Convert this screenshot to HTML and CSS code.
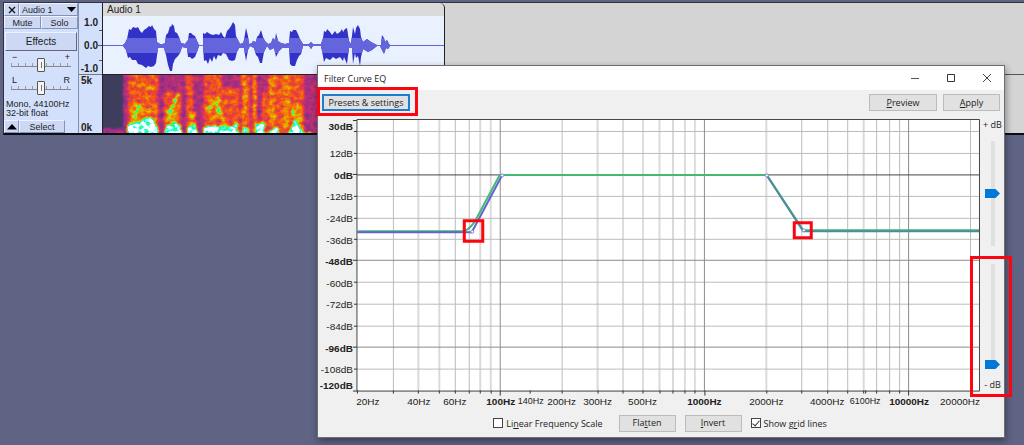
FILE: index.html
```html
<!DOCTYPE html>
<html lang="en">
<head>
<meta charset="utf-8">
<title>Filter Curve EQ</title>
<link rel="stylesheet" href="styles.css">
</head>
<body>
<main class="desktop">
  <section class="track">
    <div class="panel">
      <div class="panel-row head">
        <button class="cell close" aria-label="Close track"><svg width="8" height="8" viewBox="0 0 8 8"><path d="M1 1l6 6M7 1L1 7" stroke="#111" stroke-width="1.3"/></svg></button>
        <button class="cell name"><span>Audio 1</span><svg width="9" height="6" viewBox="0 0 9 6"><path d="M0 0h9L4.500 5z" fill="#000"/></svg></button>
      </div>
      <div class="panel-row"><button class="cell half">Mute</button><button class="cell half">Solo</button></div>
      <button class="cell effects">Effects</button>
      <div class="knob">
        <div class="ends"><span>−</span><span>+</span></div>
        <input class="hslider" type="range" aria-label="Gain" value="50">
      </div>
      <div class="knob">
        <div class="ends"><span>L</span><span>R</span></div>
        <input class="hslider" type="range" aria-label="Pan" value="50">
      </div>
      <div class="info">Mono, 44100Hz<br>32-bit float</div>
      <div class="panel-row foot">
        <button class="cell close" aria-label="Collapse"><svg width="10" height="6" viewBox="0 0 10 6"><path d="M0 5.500h10L5 0z" fill="#000"/></svg></button>
        <button class="cell select">Select</button>
      </div>
    </div>
    <div class="vruler">
      <div class="scale wave"><span>1.0</span><span>0.0</span><span>-1.0</span></div>
      <div class="scale spec"><span>5k</span><span>0k</span></div>
    </div>
    <div class="clip">
      <div class="clip-title">Audio 1</div>
      <svg class="waveform" viewBox="103 16 341 58" preserveAspectRatio="none">
        <defs>
          <path id="wave" d="M103 45H123L125 43 127 39 129 29 131 30 133 27 136 28 138 27 140 31 142 33 144 30 147 28 149 26 151 27 152 25 154 29 156 31 157 42 160 44 163 44 165 43 166 35 168 33 170 26 171 27 172 24 174 26 175 32 177 33 179 37 181 43 185 44 188 40 189 33 191 33 193 35 195 36 197 41 199 45H203V33L205 34 207 32 210 34 213 35 216 34 219 35 221 32 223 36 225 38 227 31 229 29 231 26 233 22 235 25 236 36 238 40 240 44 243 43 244 40 246 28 248 36 249 44 252 43 253 41 256 42 257 37 259 35 261 30 263 37 265 41 268 44 271 43 273 38 275 40 276 33 278 41 281 43 285 44 289 43 290 31 292 32 293 30 296 30 298 34 300 39 303 44 309 44 311 42 313 44 321 44 323 38 324 31 326 32 327 29 330 32 332 35 335 31 337 34 340 32 342 29 343 32 345 29 347 28 349 41 351 44 353 27 355 34 356 28 358 25 360 29 361 37 363 42 367 39 371 42 377 45H381L382 35 384 38 385 42 387 40 389 44 390 45H444V46H390L388 49 386 48 384 54 382 50 380 46H377L372 50 368 52 363 49 361 57 360 66 358 56 356 58 355 53 353 64 352 48 349 48 347 64 344 57 343 61 340 57 336 59 333 57 330 60 326 58 324 62 322 51 321 46H313L311 49 309 46 303 46 301 54 299 56 297 60 295 66 292 66 290 64 289 48 282 48 279 51 276 57 274 48 270 50 267 46 264 52 262 63 260 63 258 57 256 55 254 48 250 46 248 50 246 61 244 48 239 48 237 52 235 60 232 61 229 60 226 54 223 53 221 56 218 55 216 60 214 56 212 62 210 58 208 64 206 60 204 61 203 46H199L197 52 195 57 192 59 190 57 188 57 187 48 182 47 180 53 178 56 175 59 173 64 172 71 170 71 168 65 166 55 164 48 158 48 156 63 154 66 151 67 148 66 146 68 142 65 138 64 136 60 132 60 130 57 128 58 126 50 123 46H103Z"/>
          <clipPath id="rms"><rect x="103" y="38" width="341" height="15"/></clipPath>
        </defs>
        <use href="#wave" fill="#3232c8"/>
        <use href="#wave" fill="#6464dc" clip-path="url(#rms)"/>
      </svg>
      <svg class="spectrum" viewBox="103 75 341 58" preserveAspectRatio="none">
        <defs>
          <filter id="heat" filterUnits="userSpaceOnUse" x="103" y="75" width="341" height="58" color-interpolation-filters="sRGB">
            <feGaussianBlur in="SourceGraphic" stdDeviation="1.200" result="base"/>
            <feTurbulence type="fractalNoise" baseFrequency="0.180 0.220" numOctaves="3" seed="12"/>
            <feColorMatrix values="1 0 0 0 0  1 0 0 0 0  1 0 0 0 0  0 0 0 0 1" result="noise"/>
            <feComposite in="base" in2="noise" operator="arithmetic" k1="0.900" k2="0.570" k3="0" k4="0"/>
            <feComponentTransfer>
              <feFuncR type="table" tableValues="0.24 0.25 0.42 0.68 0.88 0.96 0.94 0.75 0 0.3 1"/>
              <feFuncG type="table" tableValues="0.24 0.24 0.20 0.18 0.22 0.34 0.56 0.88 1 1 1"/>
              <feFuncB type="table" tableValues="0.35 0.37 0.52 0.50 0.32 0.08 0.02 0.02 0.6 1 1"/>
              <feFuncA type="linear" slope="0" intercept="1"/>
            </feComponentTransfer>
          </filter>
        </defs>
        <g filter="url(#heat)">
          <path fill="#111" d="M90 60H460V150H90z"/>
          <path fill="#4c4c4c" d="M123 60H460V150H123zM103 128h21v8h-21z"/>
          <path fill="#767676" d="M128 70h30v70h-30zM164 92h17v48h-17zM186 70h7v70h-7zM204 70h18v70h-18zM222 88h18v52h-18zM241 70h9v70h-9zM252 70h5v70h-5zM262 92h8v44h-8zM268 70h20v70h-20zM288 70h16v70h-16z"/>
          <path fill="#8f8f8f" d="M132 83h22v6h-22zM130 103h26v20h-26zM166 108h13v22h-13zM189 111h7v18h-7zM208 97h12v22h-12zM242 70h4v65h-4zM253 74h4v60h-4zM269 78h6v48h-6zM283 74h7v54h-7zM291 104h12v28h-12z"/>
          <path stroke="#c0c0c0" stroke-width="3" fill="none" d="M131 123l8-17M168 119l10-25M205 110l12-6M216 103l8 17M292 112l8 6"/>
          <path fill="#f4f4f4" d="M127 126l9-3 14-6 8 10v9h-31zM165 128l8-6 9 5v9h-17zM188 127l8-2 2 11h-12zM203 128l10-3 18 2 6-4 2 13h-36zM243 127l6 2v7h-6zM256 126l8-6v16h-8zM269 131l9-4 2 9h-11zM289 132l5-12 9 12 8 0v6h-22z"/>
          <path fill="#484848" d="M158 70h4v58h-4zM181 70h4v60h-4zM199 70h4v65h-4zM250 70h2v60h-2zM304 70h5v63h-5z"/>
        </g>
      </svg>
    </div>
    <div class="empty"></div>
  </section>

  <section class="dialog" aria-label="Filter Curve EQ">
    <header class="titlebar">
      <h1 class="title">Filter Curve EQ</h1>
      <button class="win" aria-label="Minimize"><svg width="10" height="10" viewBox="0 0 10 10"><path d="M1 5.500h8" stroke="#555"/></svg></button>
      <button class="win" aria-label="Maximize"><svg width="10" height="10" viewBox="0 0 10 10"><path d="M1.500 1.500h7v7h-7z" fill="none" stroke="#333"/></svg></button>
      <button class="win" aria-label="Close"><svg width="10" height="10" viewBox="0 0 10 10"><path d="M1 1l8 8M9 1L1 9" stroke="#444"/></svg></button>
    </header>
    <div class="toolbar">
      <button class="btn presets">Presets &amp; settings</button>
      <button class="btn preview"><u>P</u>review</button>
      <button class="btn apply"><u>A</u>pply</button>
    </div>
    <div class="body">
      <svg class="chart" viewBox="318 117 664 293" role="img" aria-label="Filter curve">
        <path fill="#fff" d="M357 119h624v272H357z"/>
        <g class="grid">
          <path class="soft" d="M418.500 120V391M439.500 120V391M480.500 120V391M491 120V391M598 120V391M660 120V391M673.500 120V391M767 120V391M864.500 120V391"/>
          <path class="line" d="M393.500 120V391M455.500 120V391M469.500 120V391M562.500 120V391M623.500 120V391M643.500 120V391M685.500 120V391M695.500 120V391M802.500 120V391M828.500 120V391M848.500 120V391M877.500 120V391M890.500 120V391M900.500 120V391M971.500 120V391"/>
          <path class="line" d="M357 131.500H980M357 153.500H980M357 196.500H980M357 218.500H980M357 239.500H980M357 282.500H980M357 304.500H980M357 326.500H980M357 369.500H980"/>
          <path class="major" d="M500.500 120V391M705 120V391M909.500 120V391M357 260.500H980M357 347.500H980"/>
          <path class="zero" d="M357 175H980"/>
        </g>
        <path class="frame" d="M357 119.500H980.500V391.500H357z"/>
        <path class="ticks" d="M353 120.500h4M354 131.500h3M354 153.500h3M353 174.500h4M354 196.500h3M354 218.500h3M354 239.500h3M353 260.500h4M354 282.500h3M354 304.500h3M354 326.500h3M353 347.500h4M354 369.500h3M353 391.500h4M357.500 391v3M393.500 391v3M418.500 391v3M439.500 391v3M455.500 391v3M469.500 391v3M480.500 391v3M491.500 391v3M500.500 391v5M530.500 391v3M562.500 391v3M598.500 391v3M623.500 391v3M643.500 391v3M660.500 391v3M673.500 391v3M685.500 391v3M695.500 391v3M705.500 391v5M767.500 391v3M802.500 391v3M828.500 391v3M848.500 391v3M864.500 391v3M866.500 391v3M877.500 391v3M890.500 391v3M900.500 391v3M909.500 391v5"/>
        <path class="curve-green" d="M357 231.500H464Q471 229 476 220L500 175H767.500L804 230.500H980"/>
        <path class="curve-blue" d="M357 232.500H472L502 176"/>
        <path class="curve-teal" d="M767.500 175.500L804 231.500H980"/>
        <g class="points"><circle cx="472.500" cy="232" r="1.500"/><circle cx="502.500" cy="175.500" r="1.500"/><circle cx="767.500" cy="175.500" r="1.500"/><circle cx="804.500" cy="230.500" r="1.500"/></g>
        <path class="mark" d="M464.500 221h18.500v20.500h-18.500zM795 223h17v15h-17z"/>
        <g class="db">
          <text class="b" x="353" y="130">30dB</text><text x="353" y="157">12dB</text><text class="b" x="353" y="179">0dB</text><text x="353" y="200">-12dB</text><text x="353" y="222">-24dB</text><text x="353" y="244">-36dB</text><text class="b" x="353" y="265">-48dB</text><text x="353" y="287">-60dB</text><text x="353" y="308">-72dB</text><text x="353" y="330">-84dB</text><text class="b" x="353" y="352">-96dB</text><text x="353" y="373">-108dB</text><text class="b" x="353" y="389">-120dB</text>
        </g>
        <g class="hz">
          <text x="368" y="405">20Hz</text><text x="419" y="405">40Hz</text><text x="455" y="405">60Hz</text><text class="b" x="501" y="405">100Hz</text><text class="s" x="531" y="404">140Hz</text><text x="562" y="405">200Hz</text><text x="598" y="405">300Hz</text><text x="643" y="405">500Hz</text><text class="b" x="705" y="405">1000Hz</text><text x="767" y="405">2000Hz</text><text x="828" y="405">4000Hz</text><text class="s" x="866" y="404">6100Hz</text><text class="b" x="910" y="405">10000Hz</text><text x="961" y="405">20000Hz</text>
        </g>
      </svg>
      <div class="sliders">
        <label for="up">+ dB</label>
        <input class="vslider" id="up" type="range" value="50">
        <input class="vslider" id="down" type="range" value="0">
        <label for="down">- dB</label>
      </div>
    </div>
    <footer class="options">
      <label class="check"><input type="checkbox"><span>Li<u>n</u>ear Frequency Scale</span></label>
      <button class="btn">Fla<u>t</u>ten</button>
      <button class="btn"><u>I</u>nvert</button>
      <label class="check"><input type="checkbox" checked><span>Show g<u>r</u>id lines</span></label>
    </footer>
    <div class="callout callout-presets"></div>
    <div class="callout callout-gain"></div>
  </section>
</main>
</body>
</html>
```
FILE: styles.css
```css
* { box-sizing: border-box; }
body { margin: 0; background: #5f6484; font-family: "Liberation Sans", Arial, sans-serif; color: #222; }
button { font: inherit; color: inherit; padding: 0; margin: 0; }
input { margin: 0; }
svg { display: block; }
.desktop { position: relative; min-height: 100vh; padding: 2px 0 0 3px; overflow: hidden; }

.track { display: flex; height: 133px; border: 1px solid #333; border-right: 0; border-bottom: 2px solid #0c0c14; background: #d2e0fc; }
.panel { display: flex; flex-direction: column; width: 75px; font-size: 9px; border-right: 1px solid #7f8eb4; }
.panel-row { display: flex; }
.cell { display: flex; align-items: center; justify-content: center; height: 13px; background: #ccd8f4; border: 1px solid; border-color: #eef3ff #8492b4 #8492b4 #eef3ff; }
.close { width: 15px; }
.name { flex: 1; justify-content: space-between; padding: 0 1px 0 2px; }
.half { flex: 1; }
.effects { height: 20px; margin: 3px 1px 2px; font-size: 10px; border-color: #eef3ff #667 #667 #eef3ff; }
.knob { display: flex; flex-direction: column; height: 23px; padding: 0 7px; }
.ends { display: flex; justify-content: space-between; font-size: 9px; line-height: 9px; height: 5px; padding: 0 1px; }
.hslider { appearance: none; width: 100%; height: 14px; background: repeating-linear-gradient(90deg, #99a 0 1px, transparent 1px 7px) 0 5px / 100% 3px no-repeat, linear-gradient(#888, #888) 0 8px / 100% 1px no-repeat; }
.hslider::-webkit-slider-thumb { appearance: none; width: 8px; height: 14px; border: 1px solid #555; border-radius: 1px; background: linear-gradient(#777, #777) center / 1px 6px no-repeat, #f4f4f4; }
.info { flex: 1; padding: 2px; font-size: 9px; line-height: 9px; white-space: nowrap; }
.foot .select { width: 46px; }

.vruler { display: flex; flex-direction: column; width: 24px; font-size: 10px; font-weight: bold; border-right: 1px solid #222; }
.scale { display: flex; flex-direction: column; justify-content: space-between; line-height: 10px; }
.wave { height: 72px; padding: 15px 4px 0 0; text-align: right; border-bottom: 1px solid #777; background: linear-gradient(#555, #555) 100% 27px / 3px 1px no-repeat, linear-gradient(#555, #555) 100% 42px / 4px 1px no-repeat, linear-gradient(#555, #555) 100% 57px / 3px 1px no-repeat; }
.spec { flex: 1; padding: 1px 2px 0; }

.clip { display: flex; flex-direction: column; width: 342px; border-right: 1px solid #222; border-radius: 5px 5px 0 0; background: #dadada; }
.clip-title { height: 13px; padding-left: 4px; font-size: 10px; line-height: 13px; }
.waveform { width: 100%; height: 58px; background: #e9f1ff; }
.spectrum { width: 100%; height: 59px; border-top: 1px solid #222; }
.empty { flex: 1; background: linear-gradient(#555, #555) 0 71px / 100% 1px no-repeat, #d4d4d4; }

.dialog { position: absolute; left: 317px; right: 19px; top: 65px; display: flex; flex-direction: column; border: 1px solid #6d6d74; background: #f0f0f0; box-shadow: 1px 3px 7px #0006; font-family: "Open Sans", "Noto Sans", sans-serif; font-size: 9px; }
.titlebar { display: flex; align-items: center; height: 24px; padding-right: 12px; background: #fff; }
.title { flex: 1; margin: 0; padding-left: 6px; font-size: 9px; font-weight: 400; }
.win { display: grid; place-items: center; width: 10px; height: 20px; margin-left: 26px; border: 0; background: none; }
.toolbar { display: flex; height: 27px; padding: 4px 4px 6px; gap: 6px; }
.btn { height: 17px; min-width: 57px; border: 1px solid #bcbcbc; background: #e1e1e1; line-height: 14px; }
.presets { width: 88px; margin-right: auto; border: 2px solid #1a7fd0; line-height: 12px; }
.preview { width: 68px; }
.body { display: flex; }
.chart { flex: 1; min-width: 0; }
.sliders { display: flex; flex-direction: column; align-items: center; width: 23px; padding: 1px 0 16px; line-height: 14px; white-space: nowrap; }
.vslider { appearance: none; writing-mode: vertical-lr; direction: rtl; width: 16px; height: 105px; margin: 9px 0; background: linear-gradient(#e0e0e0, #e0e0e0) 6px 0 / 4px 100% no-repeat; }
.vslider::-webkit-slider-thumb { appearance: none; width: 15px; height: 9px; background: #0078d7; clip-path: polygon(0 0, 70% 0, 100% 50%, 70% 100%, 0 100%); }
.options { display: flex; align-items: center; justify-content: center; gap: 9px; height: 27px; padding: 0 2px 0 0; }
.check { display: flex; align-items: center; gap: 3px; padding: 0 7px 0 0; }
.check:last-child { padding: 0; }
.check input { appearance: none; width: 10px; height: 10px; border: 1px solid #444; background: #fff; }
.check input:checked { position: relative; }
.check input:checked::after { content: ""; position: absolute; left: 2px; top: 0; width: 3px; height: 6px; border: solid #333; border-width: 0 1px 1px 0; transform: rotate(40deg); }
.callout { position: absolute; border: 3px solid #fc0510; pointer-events: none; }
.callout-presets { left: -1px; top: 21px; width: 101px; height: 29px; }
.callout-gain { right: -8px; top: 190px; width: 42px; height: 141px; }

.grid path { fill: none; stroke-width: 1; }
.grid .line { stroke: #bcbcbc; }
.grid .soft { stroke: #dadada; stroke-width: 2; }
.grid .major { stroke: #8c8c8c; }
.grid .zero { stroke: #444; }
.frame { fill: none; stroke: #444; }
.ticks { fill: none; stroke: #333; }
.curve-blue { fill: none; stroke: #6363cf; stroke-width: 2; }
.curve-green { fill: none; stroke: #45b873; stroke-width: 2; }
.curve-teal { fill: none; stroke: #4c8ca0; stroke-width: 2; }
.points { fill: #fff; stroke: #8585d8; }
.mark { fill: none; stroke: #fc0510; stroke-width: 3; }
.chart text { font: 10px "Liberation Sans", Arial, sans-serif; fill: #222; }
.chart .b { font-weight: bold; }
.chart .s { font-size: 9px; }
.db { text-anchor: end; }
.hz { text-anchor: middle; }
```
